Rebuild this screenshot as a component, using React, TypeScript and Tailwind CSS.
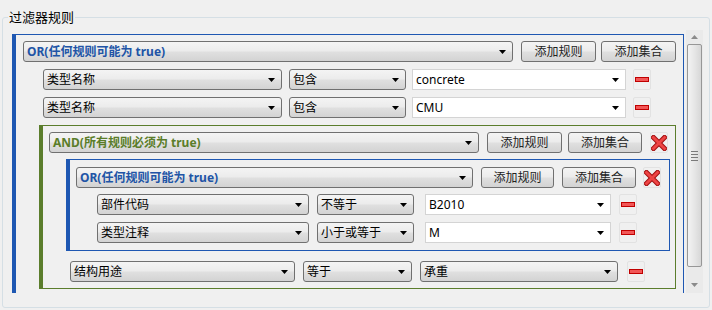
import React from "react";

const font = { fontFamily: '"Noto Sans", "Noto Sans CJK SC", sans-serif' };

const comboBg =
  "bg-[linear-gradient(180deg,#f4f4f4_0%,#ececec_45%,#dfdfdf_55%,#d3d3d3_100%)]";

const Arrow = () => (
  <svg width="7" height="4" viewBox="0 0 7 4" className="shrink-0">
    <path d="M0 0h7L3.5 4z" fill="#000" />
  </svg>
);

interface BoxProps {
  w: string;
  text: string;
  className?: string;
}

// grey drop-down
const Combo = ({ w, text, className = "" }: BoxProps) => (
  <div
    className={`${w} h-[21px] shrink-0 flex items-center justify-between rounded-[3px] border border-[#707070] ${comboBg} pl-[3px] pr-[6px] ${className}`}
  >
    <span className="whitespace-nowrap leading-[17px]">{text}</span>
    <Arrow />
  </div>
);

// editable white combo
const Field = ({ w, text, className = "" }: BoxProps) => (
  <div
    className={`${w} h-[21px] shrink-0 flex items-center justify-between border border-[#d4d4d4] bg-white pl-[3px] pr-[6px] ${className}`}
  >
    <span className="whitespace-nowrap leading-[17px]">{text}</span>
    <Arrow />
  </div>
);

const Button = ({ w, text, className = "" }: BoxProps) => (
  <div
    className={`${w} h-[21px] shrink-0 flex items-center justify-center rounded-[3px] border border-[#707070] ${comboBg} text-[#222] whitespace-nowrap leading-[17px] ${className}`}
  >
    {text}
  </div>
);

const Minus = ({ className = "" }: { className?: string }) => (
  <div
    className={`w-[18px] h-[21px] shrink-0 flex items-center justify-center rounded-[2px] border border-[#e2e2e2] ${className}`}
  >
    <div className="w-[14px] h-[5px] border border-[#c00000] bg-[#f25757]" />
  </div>
);

const Remove = ({ className = "" }: { className?: string }) => (
  <div
    className={`w-[18px] h-[21px] shrink-0 flex items-center justify-center rounded-[2px] border border-[#e2e2e2] ${className}`}
  >
    <svg width="16" height="16" viewBox="0 0 16 16">
      <path d="M2.5 2.5l11 11M13.5 2.5l-11 11" stroke="#a01010" strokeWidth="5" strokeLinecap="square" />
      <path d="M2.5 2.5l11 11M13.5 2.5l-11 11" stroke="#ee4444" strokeWidth="3" strokeLinecap="square" />
    </svg>
  </div>
);

const ScrollArrow = ({ down }: { down?: boolean }) => (
  <svg width="7" height="4" viewBox="0 0 7 4">
    <path d={down ? "M0 0h7L3.5 4z" : "M0 4h7L3.5 0z"} fill="#8a8a8a" />
  </svg>
);

export default function App() {
  return (
    <div className="w-[712px] h-[310px] overflow-hidden bg-[#f0f0f0] text-[12px] text-black" style={font}>
      <fieldset className="ml-[2px] mt-[8px] w-[708px] h-[300px] rounded-[3px] border border-[#d5dfe5] p-0 m-0">
        <legend className="ml-[5px] px-[1px] text-[13px] leading-[18px]">过滤器规则</legend>

        <div className="ml-[7px] mt-[4px] w-[693px] h-[263px] flex">
          {/* content */}
          <div className="flex-1 overflow-hidden">
            {/* outer OR */}
            <div className="ml-[2px] mt-[4px] w-[672px] border-l-[4px] border-t border-r border-b border-[#1e57b2] pt-[6px] pb-[7px]">
              <div className="flex ml-[7px]">
                <Combo w="w-[490px]" text="OR(任何规则可能为 true)" className="font-bold text-[#2154a6]" />
                <Button w="w-[75px]" text="添加规则" className="ml-[8px]" />
                <Button w="w-[75px]" text="添加集合" className="ml-[5px]" />
              </div>

              <div className="flex ml-[27px] mt-[7px]">
                <Combo w="w-[239px]" text="类型名称" />
                <Combo w="w-[117px]" text="包含" className="ml-[7px]" />
                <Field w="w-[214px]" text="concrete" className="ml-[6px]" />
                <Minus className="ml-[7px]" />
              </div>
              <div className="flex ml-[27px] mt-[7px]">
                <Combo w="w-[239px]" text="类型名称" />
                <Combo w="w-[117px]" text="包含" className="ml-[7px]" />
                <Field w="w-[214px]" text="CMU" className="ml-[6px]" />
                <Minus className="ml-[7px]" />
              </div>

              {/* AND */}
              <div className="ml-[23px] mt-[7px] w-[637px] border-l-[4px] border-t border-r border-b border-[#5b7d2c] pt-[6px] pb-[6px]">
                <div className="flex ml-[6px]">
                  <Combo w="w-[430px]" text="AND(所有规则必须为 true)" className="font-bold text-[#5a7d29]" />
                  <Button w="w-[75px]" text="添加规则" className="ml-[8px]" />
                  <Button w="w-[74px]" text="添加集合" className="ml-[6px]" />
                  <Remove className="ml-[8px]" />
                </div>

                {/* inner OR */}
                <div className="ml-[23px] mt-[6px] w-[604px] border-l-[4px] border-t border-r border-b border-[#1e57b2] pt-[7px] pb-[7px]">
                  <div className="flex ml-[6px]">
                    <Combo w="w-[397px]" text="OR(任何规则可能为 true)" className="font-bold text-[#2154a6]" />
                    <Button w="w-[73px]" text="添加规则" className="ml-[8px]" />
                    <Button w="w-[74px]" text="添加集合" className="ml-[8px]" />
                    <Remove className="ml-[7px]" />
                  </div>
                  <div className="flex ml-[27px] mt-[6px]">
                    <Combo w="w-[212px]" text="部件代码" />
                    <Combo w="w-[97px]" text="不等于" className="ml-[8px]" />
                    <Field w="w-[186px]" text="B2010" className="ml-[11px]" />
                    <Minus className="ml-[8px]" />
                  </div>
                  <div className="flex ml-[27px] mt-[7px]">
                    <Combo w="w-[212px]" text="类型注释" />
                    <Combo w="w-[97px]" text="小于或等于" className="ml-[8px]" />
                    <Field w="w-[186px]" text="M" className="ml-[11px]" />
                    <Minus className="ml-[8px]" />
                  </div>
                </div>

                <div className="flex ml-[27px] mt-[10px]">
                  <Combo w="w-[225px]" text="结构用途" />
                  <Combo w="w-[109px]" text="等于" className="ml-[8px]" />
                  <Combo w="w-[198px]" text="承重" className="ml-[8px]" />
                  <Minus className="ml-[9px]" />
                </div>
              </div>
            </div>
          </div>

          {/* scrollbar */}
          <div className="w-[17px] h-full flex flex-col bg-[#eaeaea]">
            <div className="h-[14px] flex items-center justify-center">
              <ScrollArrow />
            </div>
            <div className="mx-[1px] h-[223px] rounded-[2px] border border-[#979797] bg-[linear-gradient(90deg,#f3f3f3,#e6e6e6_50%,#d7d7d7)] flex flex-col items-center justify-center gap-[2px]">
              <div className="w-[7px] h-px bg-[#7a7a7a]" />
              <div className="w-[7px] h-px bg-[#7a7a7a]" />
              <div className="w-[7px] h-px bg-[#7a7a7a]" />
              <div className="w-[7px] h-px bg-[#7a7a7a]" />
            </div>
            <div className="flex-1" />
            <div className="h-[17px] flex items-center justify-center">
              <ScrollArrow down />
            </div>
          </div>
        </div>
      </fieldset>
    </div>
  );
}
